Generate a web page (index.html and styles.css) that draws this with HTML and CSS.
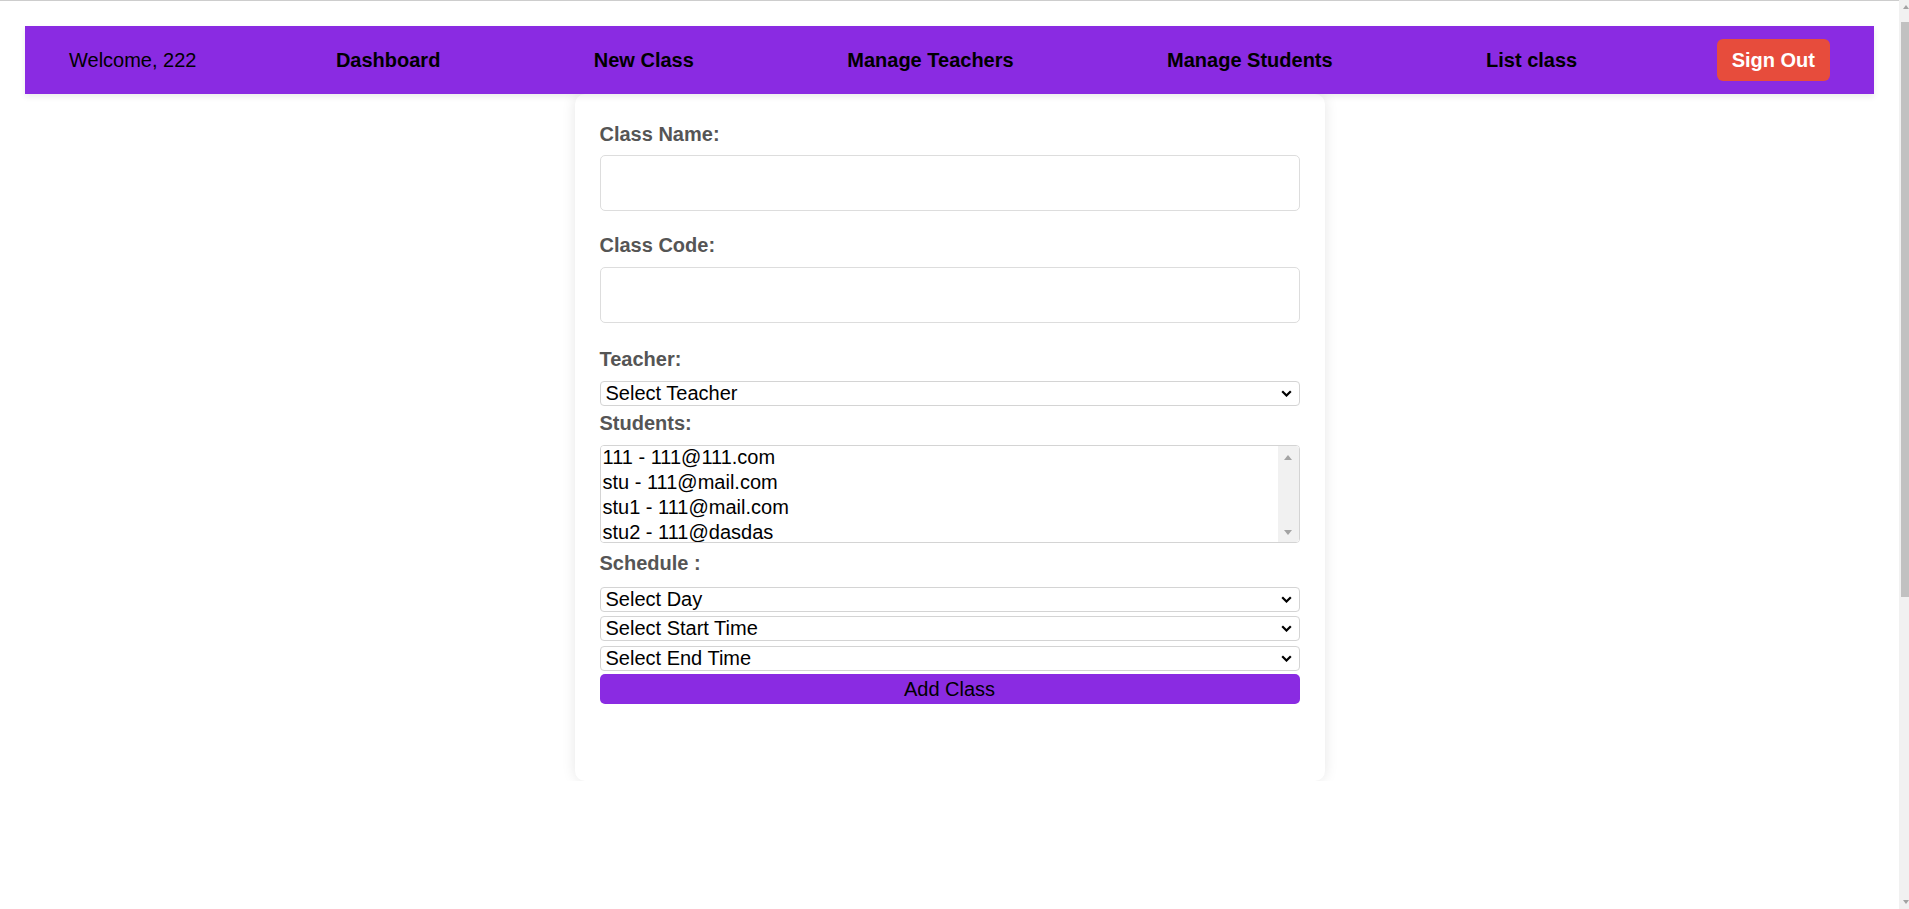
FILE: index.html
```html
<!DOCTYPE html>
<html lang="en">
<head>
<meta charset="utf-8">
<title>New Class</title>
<link rel="stylesheet" href="styles.css">
</head>
<body>
<div class="topline"></div>
<nav class="navbar">
  <span class="welcome">Welcome, 222</span>
  <a class="nav-link" href="#">Dashboard</a>
  <a class="nav-link" href="#">New Class</a>
  <a class="nav-link" href="#">Manage Teachers</a>
  <a class="nav-link" href="#">Manage Students</a>
  <a class="nav-link" href="#">List class</a>
  <button class="signout" type="button">Sign Out</button>
</nav>
<main class="page">
  <div class="card">
    <form class="form">
      <label class="label l-name">Class Name:</label>
      <input class="text-input" type="text">
      <label class="label l-code">Class Code:</label>
      <input class="text-input" type="text">
      <label class="label l-teacher">Teacher:</label>
      <select class="select">
        <option>Select Teacher</option>
      </select>
      <label class="label l-students">Students:</label>
      <div class="multi-wrap">
        <select class="multi" multiple size="4">
          <option>111 - 111@111.com</option>
          <option>stu - 111@mail.com</option>
          <option>stu1 - 111@mail.com</option>
          <option>stu2 - 111@dasdas</option>
        </select>
        <div class="multi-scroll" aria-hidden="true">
          <span class="arrow-up"></span>
          <span class="arrow-down"></span>
        </div>
      </div>
      <label class="label l-schedule">Schedule :</label>
      <select class="select s-day"><option>Select Day</option></select>
      <select class="select s-start"><option>Select Start Time</option></select>
      <select class="select s-end"><option>Select End Time</option></select>
      <button class="add-btn" type="button">Add Class</button>
    </form>
  </div>
</main>
<div class="page-scrollbar" aria-hidden="true">
  <span class="sb-up"></span>
  <span class="sb-thumb"></span>
  <span class="sb-down"></span>
</div>
</body>
</html>
```
FILE: styles.css
```css
html {
  background: #ffffff;
}
body {
  margin: 0 10px 0 0;
  font-family: "Liberation Sans", Arial, sans-serif;
}
.topline {
  height: 1px;
  background: #cdcdcd;
}
.navbar {
  margin: 25px 25px 0;
  height: 68px;
  box-sizing: border-box;
  padding: 0 44px;
  background: #8a2be2;
  display: flex;
  align-items: center;
  justify-content: space-between;
  box-shadow: 0 3px 6px rgba(0, 0, 0, 0.08);
  position: relative;
  z-index: 1;
}
.welcome {
  font-size: 20px;
  color: #000;
}
.nav-link {
  font-size: 20px;
  font-weight: bold;
  color: #000;
  text-decoration: none;
  padding: 0 14px;
}
.signout {
  height: 42px;
  padding: 0 15px;
  border: none;
  border-radius: 6px;
  background: #e74c3c;
  color: #fff;
  font-family: "Liberation Sans", Arial, sans-serif;
  font-size: 20px;
  font-weight: bold;
}
.page {
  display: flex;
  justify-content: center;
}
.card {
  width: 750px;
  box-sizing: border-box;
  padding: 27px 25px 77px;
  background: #fff;
  border-radius: 10px;
  box-shadow: 0 0 14px rgba(0, 0, 0, 0.1);
}
.form {
  display: flex;
  flex-direction: column;
}
.label {
  font-size: 20px;
  line-height: 23px;
  font-weight: bold;
  color: #555;
  margin-bottom: 11px;
}
.l-name { margin-top: 2px; margin-bottom: 9px; }
.l-code { margin-top: 23px; margin-bottom: 10px; }
.l-teacher { margin-top: 25px; margin-bottom: 10px; }
.l-students { margin-top: 6px; margin-bottom: 10px; }
.l-schedule { margin-top: 9px; margin-bottom: 12px; }
.text-input {
  height: 56px;
  box-sizing: border-box;
  border: 1px solid #ddd;
  border-radius: 5px;
  padding: 0 12px;
  font-family: "Liberation Sans", Arial, sans-serif;
  font-size: 20px;
}
.select {
  -webkit-appearance: none;
  appearance: none;
  height: 25px;
  box-sizing: border-box;
  border: 1px solid #d4d4d4;
  border-radius: 4px;
  padding: 0 24px 0 5px;
  line-height: 23px;
  background-color: #fff;
  background-image: url("data:image/svg+xml,%3Csvg xmlns='http://www.w3.org/2000/svg' width='11' height='7' viewBox='0 0 11 7'%3E%3Cpath d='M1.2 1.2 L5.5 5.5 L9.8 1.2' fill='none' stroke='%23000' stroke-width='2.2'/%3E%3C/svg%3E");
  background-repeat: no-repeat;
  background-position: right 7px center;
  background-size: 11px 7px;
  color: #000;
  font-family: "Liberation Sans", Arial, sans-serif;
  font-size: 20px;
}
.s-start { margin-top: 4px; }
.s-end { margin-top: 5px; }
.multi-wrap {
  position: relative;
  display: flex;
  flex-direction: column;
}
.multi {
  height: 98px;
  box-sizing: border-box;
  border: 1px solid #d4d4d4;
  border-radius: 4px;
  color: #000;
  font-family: "Liberation Sans", Arial, sans-serif;
  font-size: 20px;
}
.multi-scroll {
  position: absolute;
  top: 1px;
  right: 1px;
  bottom: 1px;
  width: 21px;
  background: #f1f1f1;
  border-radius: 0 3px 3px 0;
}
.arrow-up,
.arrow-down {
  position: absolute;
  left: 6px;
  width: 0;
  height: 0;
  border-left: 4.5px solid transparent;
  border-right: 4.5px solid transparent;
}
.arrow-up {
  top: 9px;
  border-bottom: 5px solid #a3a3a3;
}
.arrow-down {
  bottom: 7px;
  border-top: 5px solid #a3a3a3;
}
.add-btn {
  margin-top: 3px;
  height: 30px;
  border: none;
  border-radius: 5px;
  background: #8a2be2;
  color: #000;
  font-family: "Liberation Sans", Arial, sans-serif;
  font-size: 20px;
}
.page-scrollbar {
  position: fixed;
  top: 0;
  right: 0;
  bottom: 0;
  width: 10px;
  background: #f1f1f1;
}
.sb-up,
.sb-down {
  position: absolute;
  right: 0;
  width: 0;
  height: 0;
  border-left: 3.5px solid transparent;
  border-right: 3.5px solid transparent;
}
.sb-up {
  top: 5px;
  border-bottom: 4px solid #a3a3a3;
}
.sb-down {
  bottom: 5px;
  border-top: 4px solid #a3a3a3;
}
.sb-thumb {
  position: absolute;
  top: 22px;
  left: 2px;
  right: 0;
  height: 575px;
  background: #c1c1c1;
}
```
